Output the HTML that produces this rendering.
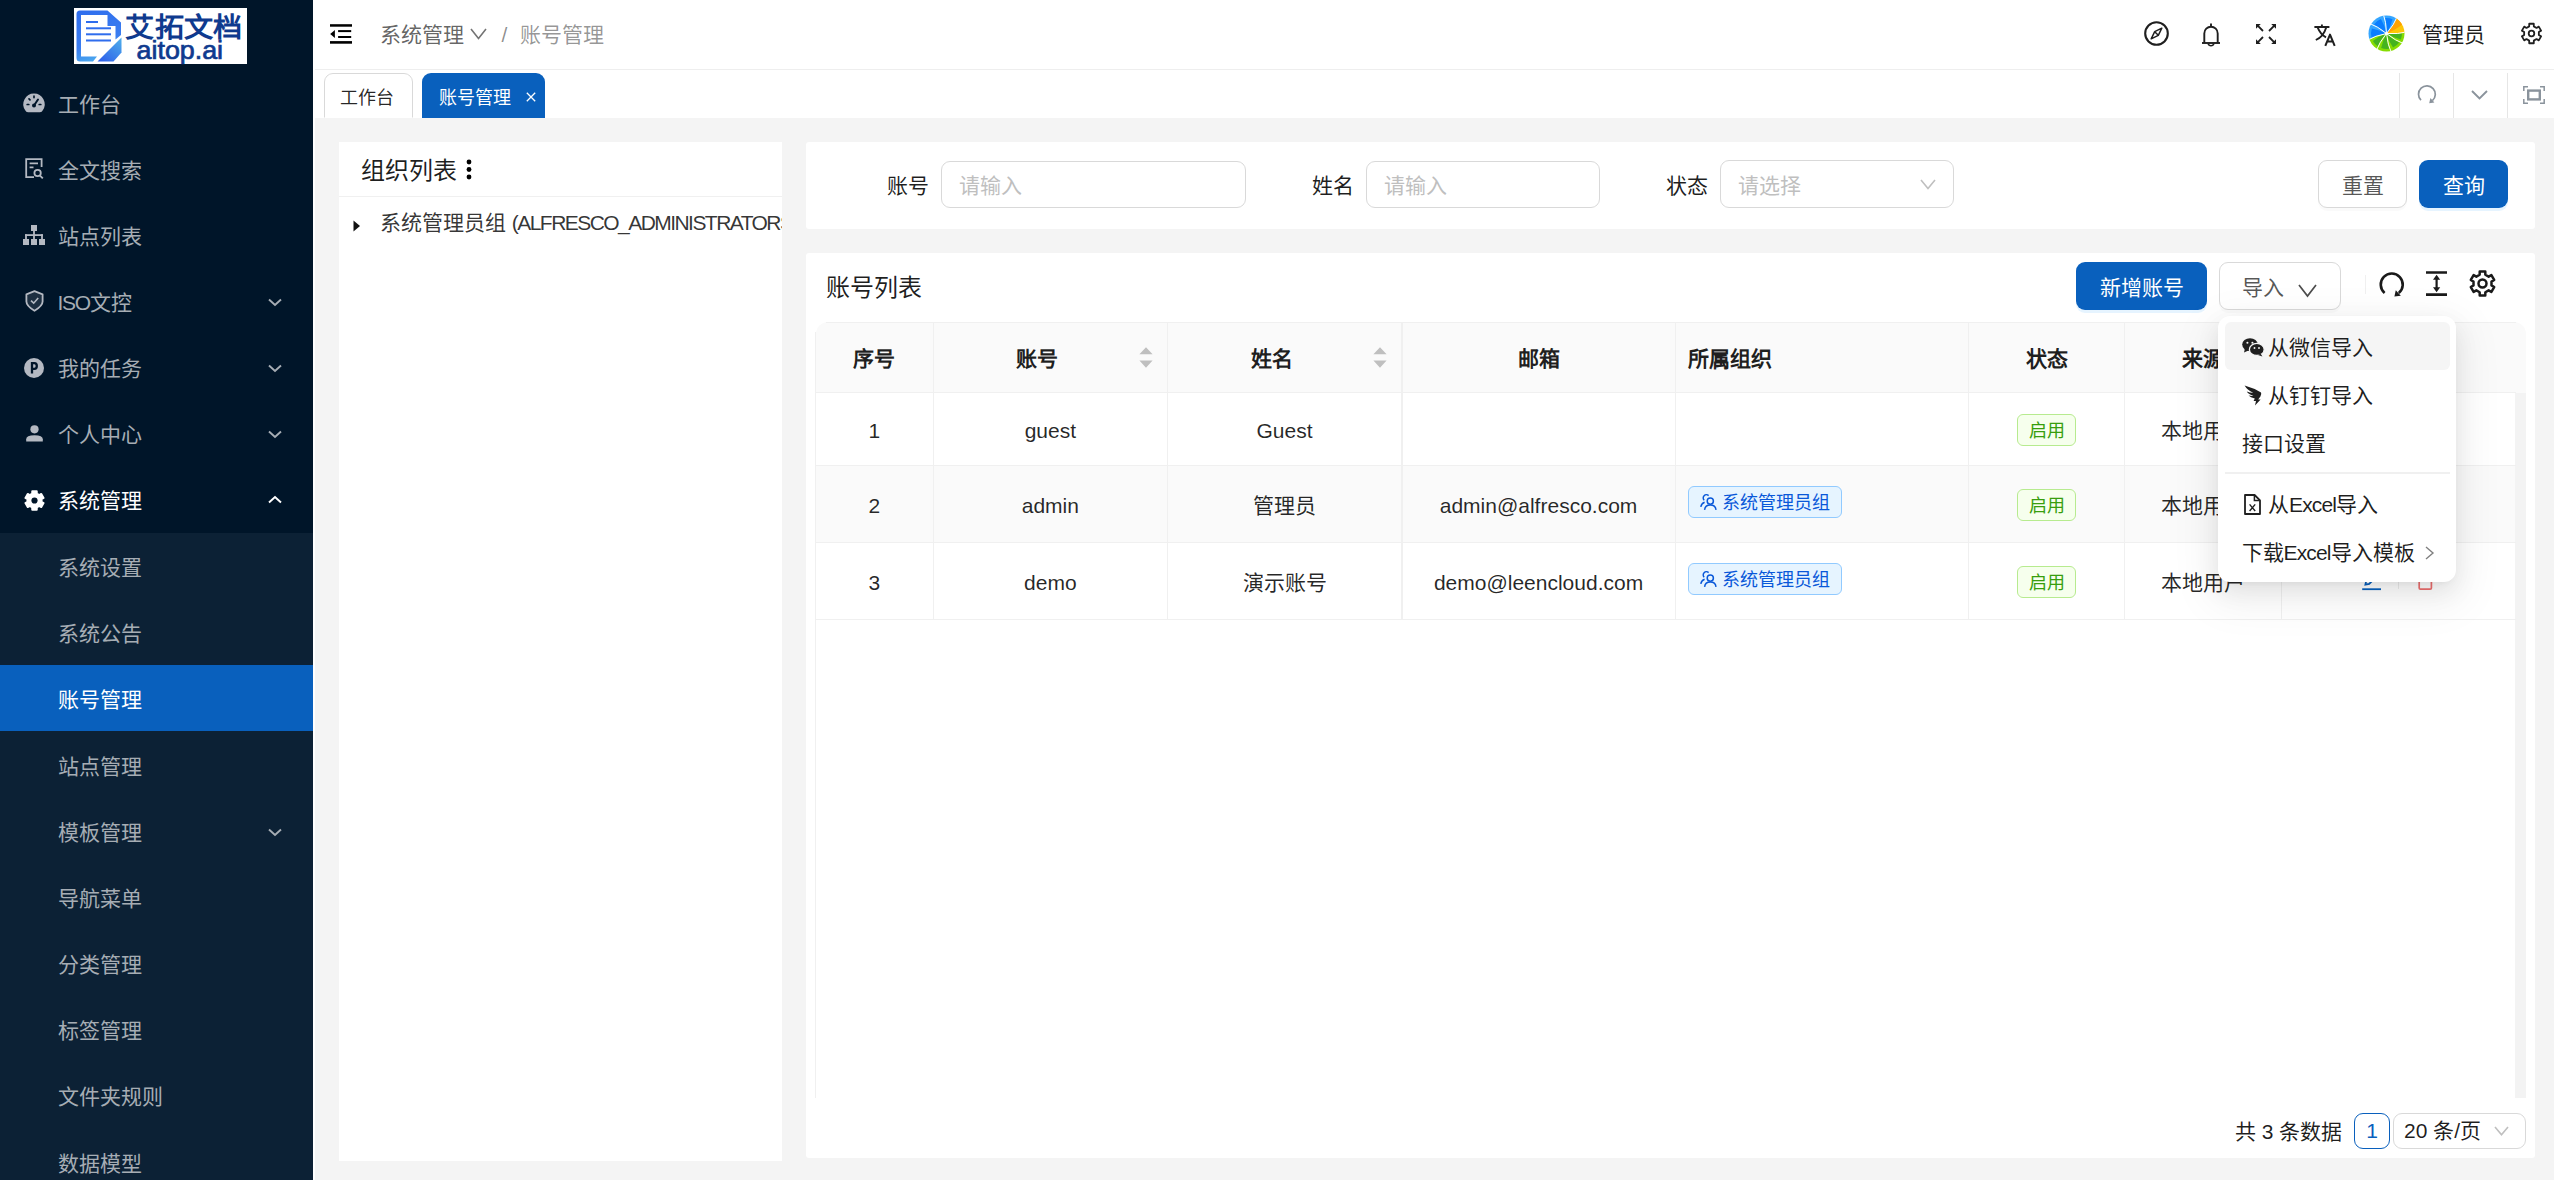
<!DOCTYPE html><html lang="zh-CN"><head><meta charset="utf-8"><title>账号管理</title><style>
*{box-sizing:border-box;margin:0;padding:0}
html,body{width:2554px;height:1180px;overflow:hidden}
body{position:relative;background:#f4f4f4;font-family:"Liberation Sans",sans-serif;font-size:21px;color:rgba(0,0,0,.88);-webkit-font-smoothing:antialiased}
.abs{position:absolute}
i{display:inline-block;width:1em;text-align:center;font-style:normal}
.t{position:absolute;white-space:nowrap;line-height:30px;height:30px}
svg{position:absolute;overflow:visible}
#side{position:absolute;left:0;top:0;width:313px;height:1180px;background:#001529}
#sub{position:absolute;left:0;top:533px;width:313px;height:647px;background:#0c2135}
.mi{position:absolute;left:57.5px;color:#a6adb4;font-size:21px;line-height:30px;height:30px;white-space:nowrap}
.mi.w{color:#fff}
#hdr{position:absolute;left:315px;top:0;width:2239px;height:70px;background:#fff;border-bottom:1px solid #eee}
#tabs{position:absolute;left:315px;top:70px;width:2239px;height:47.5px;background:#fff}
.card{position:absolute;background:#fff}
.inp{position:absolute;border:1.5px solid #d9d9d9;border-radius:9px;background:#fff}
.ph{color:#bfbfbf}
.btn{position:absolute;border-radius:9px;text-align:center;font-size:21px;line-height:47px;height:47.5px;padding-top:2px}
.btn.p{background:#0960bd;color:#fff;box-shadow:0 3px 0 rgba(5,145,255,.1)}
.btn.d{background:#fff;color:rgba(0,0,0,.66);border:1.5px solid #d9d9d9;line-height:44px;padding-top:2.5px;box-shadow:0 3px 0 rgba(0,0,0,.02)}
.th{position:absolute;font-weight:bold;font-size:21px;line-height:30px;height:30px;text-align:center;white-space:nowrap;color:rgba(0,0,0,.88)}
.td{position:absolute;font-size:21px;line-height:30px;height:30px;text-align:center;white-space:nowrap;color:rgba(0,0,0,.85)}
.vl{position:absolute;width:1.5px;background:#f0f0f0}
.hl{position:absolute;height:1.5px;background:#f0f0f0}
.gtag{position:absolute;width:59px;height:32px;border:1.5px solid #b7eb8f;background:#f6ffed;border-radius:6px;color:#389e0d;font-size:18px;line-height:29px;padding-top:2.2px;text-align:center}
.btag{position:absolute;width:154px;height:32px;border:1.5px solid #91caff;background:#e6f4ff;border-radius:6px;color:#0958d9;font-size:18px;line-height:29px;white-space:nowrap}
.dd{position:absolute;left:2218px;top:316px;width:238px;height:266px;background:#fff;border-radius:12px;box-shadow:0 9px 24px 0 rgba(0,0,0,.08),0 4px 9px -6px rgba(0,0,0,.12),0 13px 42px 12px rgba(0,0,0,.05)}
.di{position:absolute;font-size:21px;line-height:30px;height:30px;white-space:nowrap;color:rgba(0,0,0,.88)}
</style></head><body>
<div id="side">
<div id="sub"></div>
<div class="abs" style="left:74px;top:8px;width:173px;height:56px;background:#fff"></div>
<svg style="left:74px;top:8px" width="173" height="56" viewBox="0 0 173 56">
<defs><linearGradient id="lg1" x1="0" y1="0" x2="0.3" y2="1"><stop offset="0" stop-color="#2f6ded"/><stop offset="0.7" stop-color="#3a7df0"/><stop offset="1" stop-color="#4aa6ee"/></linearGradient>
<linearGradient id="lg2" x1="1" y1="0" x2="0.2" y2="1"><stop offset="0" stop-color="#4fb0ea"/><stop offset="1" stop-color="#2f62ea"/></linearGradient></defs>
<path d="M6 2.5 H33.5 L47 14.5 V27 L41.5 31.5 V18 H33.5 V7 H7 V48.5 H23 L19 53.5 H6 Q2.5 53.5 2.5 50 V6 Q2.5 2.5 6 2.5Z" fill="url(#lg1)"/>
<path d="M47.5 29.5 V44.5 L39.5 53.5 H23.5 Z" fill="url(#lg2)"/>
<rect x="12" y="13" width="12" height="2" fill="#2f6ded"/><rect x="12" y="19.3" width="25" height="2" fill="#2f6ded"/><rect x="12" y="25.3" width="25" height="2" fill="#2f6ded"/><rect x="12" y="31.5" width="25" height="2" fill="#2f6ded"/>
<text x="109.7" y="28.6" text-anchor="middle" font-family="Liberation Sans, sans-serif" font-weight="bold" font-size="27" fill="#0f3a8e" textLength="116.5" lengthAdjust="spacingAndGlyphs">艾拓文档</text>
<text x="105.8" y="50.7" text-anchor="middle" font-family="Liberation Sans, sans-serif" font-size="25.5" fill="#0f3a8e" stroke="#0f3a8e" stroke-width="0.7" textLength="86.5" lengthAdjust="spacingAndGlyphs">aitop.ai</text>
</svg>
<div class="mi" style="top:90.0px"><i>工</i><i>作</i><i>台</i></div>
<div class="mi" style="top:156.0px"><i>全</i><i>文</i><i>搜</i><i>索</i></div>
<div class="mi" style="top:222.0px"><i>站</i><i>点</i><i>列</i><i>表</i></div>
<div class="mi" style="top:288.0px"><span style="letter-spacing:-1.3px">ISO</span><i>文</i><i>控</i></div>
<svg style="left:268px;top:298.0px" width="14" height="9" viewBox="0 0 14 9"><path d="M1 1.5 L7 7 L13 1.5" fill="none" stroke="#a6adb4" stroke-width="1.9"/></svg>
<div class="mi" style="top:354.0px"><i>我</i><i>的</i><i>任</i><i>务</i></div>
<svg style="left:268px;top:364.0px" width="14" height="9" viewBox="0 0 14 9"><path d="M1 1.5 L7 7 L13 1.5" fill="none" stroke="#a6adb4" stroke-width="1.9"/></svg>
<div class="mi" style="top:420.0px"><i>个</i><i>人</i><i>中</i><i>心</i></div>
<svg style="left:268px;top:430.0px" width="14" height="9" viewBox="0 0 14 9"><path d="M1 1.5 L7 7 L13 1.5" fill="none" stroke="#a6adb4" stroke-width="1.9"/></svg>
<div class="mi w" style="top:486.0px"><i>系</i><i>统</i><i>管</i><i>理</i></div>
<svg style="left:268px;top:495px" width="14" height="9" viewBox="0 0 14 9"><path d="M1 7.5 L7 2 L13 7.5" fill="none" stroke="#fff" stroke-width="1.9"/></svg>
<div class="mi" style="top:553.0px"><i>系</i><i>统</i><i>设</i><i>置</i></div>
<div class="mi" style="top:619.2px"><i>系</i><i>统</i><i>公</i><i>告</i></div>
<div class="abs" style="left:0;top:665.3px;width:313px;height:66px;background:#0960bd"></div>
<div class="mi w" style="top:685.3px"><i>账</i><i>号</i><i>管</i><i>理</i></div>
<div class="mi" style="top:751.5px"><i>站</i><i>点</i><i>管</i><i>理</i></div>
<div class="mi" style="top:817.7px"><i>模</i><i>板</i><i>管</i><i>理</i></div>
<svg style="left:268px;top:827.7px" width="14" height="9" viewBox="0 0 14 9"><path d="M1 1.5 L7 7 L13 1.5" fill="none" stroke="#a6adb4" stroke-width="1.9"/></svg>
<div class="mi" style="top:883.9px"><i>导</i><i>航</i><i>菜</i><i>单</i></div>
<div class="mi" style="top:950.0px"><i>分</i><i>类</i><i>管</i><i>理</i></div>
<div class="mi" style="top:1016.2px"><i>标</i><i>签</i><i>管</i><i>理</i></div>
<div class="mi" style="top:1082.4px"><i>文</i><i>件</i><i>夹</i><i>规</i><i>则</i></div>
<div class="mi" style="top:1148.5px"><i>数</i><i>据</i><i>模</i><i>型</i></div>
<svg style="left:23px;top:93px" width="22" height="20" viewBox="0 0 22 20"><path d="M11 0.6 A10.6 10.6 0 0 0 2.2 17.2 Q3 19.3 5 19.3 H17 Q19 19.3 19.8 17.2 A10.6 10.6 0 0 0 11 0.6Z" fill="#b4b9c2"/><g stroke="#001529" stroke-width="1.7" stroke-linecap="round"><path d="M11 12.5 L15 6.5" stroke-width="2"/><path d="M4.2 11.5 h1.6 M16.2 11.5 h1.6 M11 3.2 v1.4 M6 5.8 l1 1"/></g><circle cx="11" cy="12.5" r="2" fill="#001529"/></svg>
<svg style="left:24.5px;top:158px" width="19" height="22" viewBox="0 0 19 22"><g fill="none" stroke="#b4b9c2" stroke-width="1.8"><path d="M9 19.2 H1.2 V1.2 H16.6 V9"/><path d="M4.6 5.4 H13 M4.6 9.3 H8.5"/><circle cx="12.6" cy="15" r="3.2"/><path d="M15 17.6 L17.8 20.4"/></g></svg>
<svg style="left:23px;top:225px" width="22" height="20" viewBox="0 0 22 20"><g fill="#b4b9c2"><rect x="8" y="0" width="6" height="6"/><rect x="0" y="14" width="6" height="6"/><rect x="8" y="14" width="6" height="6"/><rect x="16" y="14" width="6" height="6"/><rect x="10.1" y="6" width="1.8" height="8"/><rect x="2.1" y="9.2" width="17.8" height="1.8"/><rect x="2.1" y="9.2" width="1.8" height="5"/><rect x="18.1" y="9.2" width="1.8" height="5"/></g></svg>
<svg style="left:24.5px;top:290px" width="19" height="22" viewBox="0 0 19 22"><path d="M9.5 1.2 L17.6 4.4 V11.6 Q17.6 16 9.5 20.8 Q1.4 16 1.4 11.6 V4.4Z" fill="rgba(180,185,194,.16)" stroke="#b4b9c2" stroke-width="1.8" stroke-linejoin="round"/><path d="M6 10.6 L8.7 13.2 L13.2 8" fill="none" stroke="#b4b9c2" stroke-width="1.6"/></svg>
<svg style="left:24px;top:358px" width="20" height="20" viewBox="0 0 20 20"><circle cx="10" cy="10" r="10" fill="#b4b9c2"/><path d="M8 15.4 V5.2 H10.4 Q12.8 5.2 12.8 8 Q12.8 10.8 10.4 10.8 H8" fill="none" stroke="#001529" stroke-width="2.3"/></svg>
<svg style="left:25.5px;top:425px" width="17" height="17" viewBox="0 0 17 17"><circle cx="8.5" cy="4.3" r="4.1" fill="#b4b9c2"/><path d="M0.2 16.6 V14.2 Q0.2 10.2 8.5 10.2 Q16.8 10.2 16.8 14.2 V16.6Z" fill="#b4b9c2"/></svg>
<svg style="left:23.5px;top:489.5px" width="21" height="21" viewBox="0 0 21 21"><path d="M12.74 19.63 L8.26 19.63 L8.20 17.32 L5.74 15.90 L3.72 17.01 L1.47 13.12 L3.44 11.92 L3.44 9.08 L1.47 7.88 L3.72 3.99 L5.74 5.10 L8.20 3.68 L8.26 1.37 L12.74 1.37 L12.80 3.68 L15.26 5.10 L17.28 3.99 L19.53 7.88 L17.56 9.08 L17.56 11.92 L19.53 13.12 L17.28 17.01 L15.26 15.90 L12.80 17.32Z" fill="#fff" stroke="#fff" stroke-width="2" stroke-linejoin="round"/><circle cx="10.5" cy="10.5" r="3.1" fill="#001529"/></svg>
</div>
<div class="abs" style="left:313px;top:0;width:1.5px;height:1180px;background:#fff"></div>
<div id="hdr"></div>
<svg style="left:330px;top:24px" width="22" height="20" viewBox="0 0 22 20"><rect x="0" y="0.2" width="22" height="2.5"/><rect x="8.1" y="6.1" width="13.1" height="2"/><rect x="8.1" y="12" width="13.1" height="2"/><rect x="0" y="17.1" width="22" height="2.6"/><path d="M0.2 10 L4.9 5.9 V14.1Z"/></svg>
<div class="t" style="left:380px;top:19.5px;color:rgba(0,0,0,.62)"><i>系</i><i>统</i><i>管</i><i>理</i></div>
<svg style="left:470px;top:28px" width="17" height="12" viewBox="0 0 17 12"><path d="M1 1 L8.5 10.5 L16 1" fill="none" stroke="rgba(0,0,0,.55)" stroke-width="1.6"/></svg>
<div class="t" style="left:501.5px;top:19.5px;color:rgba(0,0,0,.45)">/</div>
<div class="t" style="left:520px;top:19.5px;color:rgba(0,0,0,.42)"><i>账</i><i>号</i><i>管</i><i>理</i></div>
<svg style="left:2144px;top:21px" width="25" height="25" viewBox="0 0 25 25"><circle cx="12.5" cy="12.5" r="11.3" fill="none" stroke="#1f1f1f" stroke-width="2.1"/><path d="M17.8 7.2 L14.3 14.3 L7.2 17.8 L10.7 10.7Z M10.7 10.7 L14.3 14.3" fill="none" stroke="#1f1f1f" stroke-width="1.5" stroke-linejoin="round"/></svg>
<svg style="left:2202.2px;top:22.6px" width="18" height="25" viewBox="0 0 18 25"><g fill="none" stroke="#1f1f1f" stroke-width="1.9"><path d="M0 20 H18"/><path d="M2.3 20 V10.4 A6.7 6.7 0 0 1 15.7 10.4 V20"/><path d="M9 3.6 V0.4"/><path d="M6.2 20.6 A2.9 2.9 0 0 0 11.8 20.6" stroke-width="1.7"/></g></svg>
<svg style="left:2255.5px;top:23.5px" width="20" height="20" viewBox="0 0 20 20"><g fill="none" stroke="#1f1f1f" stroke-width="1.8"><path d="M1.2 1.2 L7 7 M18.8 1.2 L13 7 M1.2 18.8 L7 13 M18.8 18.8 L13 13"/></g><g fill="#1f1f1f"><path d="M0 0 H4.8 L0 4.8Z M20 0 V4.8 L15.2 0Z M0 20 V15.2 L4.8 20Z M20 20 H15.2 L20 15.2Z"/></g></svg>
<svg style="left:2313.5px;top:24px" width="22" height="22" viewBox="0 0 22 22"><g fill="none" stroke="#1f1f1f" stroke-width="1.9"><path d="M0.4 3 H15.4 M7.9 0.4 V3"/><path d="M3.6 3.4 Q6.5 10.5 12 13.4"/><path d="M12.2 3.4 Q9.5 12.5 1.8 16"/><path d="M11.3 21.9 L16 10.6 L20.7 21.9 M13 17.6 H19" stroke-width="2" stroke-linejoin="round"/></g></svg>
<svg style="left:2368.2px;top:15.4px" width="37" height="37" viewBox="-18.5 -18.5 37 37"><defs><clipPath id="avc"><circle cx="0" cy="0" r="18"/></clipPath></defs><g clip-path="url(#avc)"><path d="M0 0 Q10.96 0.96 21.92 -1.92 A22.0 22.0 0 0 0 11.66 -18.66 Q7.36 -8.17 0 0Z" fill="#fdc707"/><path d="M0 0 Q10.23 -4.03 18.76 -11.49 A22.0 22.0 0 0 0 11.66 -18.66 Q7.36 -8.17 0 0Z" fill="#ffa200"/><path d="M0 0 Q7.36 -8.17 11.66 -18.66 A22.0 22.0 0 0 0 -3.82 -21.67 Q0.00 -11.00 0 0Z" fill="#35a6ff"/><path d="M0 0 Q4.19 -6.52 6.00 -14.29 A15.5 15.5 0 0 0 -1.34 -15.44 Q0.68 -7.72 0 0Z" fill="#0b7dff"/><path d="M0 0 Q0.00 -11.00 -3.82 -21.67 A22.0 22.0 0 0 0 -19.05 -11.00 Q-8.43 -7.07 0 0Z" fill="#35a6ff"/><path d="M0 0 Q-1.48 -7.61 -5.55 -14.47 A15.5 15.5 0 0 0 -12.54 -9.11 Q-5.38 -5.57 0 0Z" fill="#0b7dff"/><path d="M0 0 Q-8.43 -7.07 -19.05 -11.00 A22.0 22.0 0 0 0 -20.67 7.52 Q-10.83 1.91 0 0Z" fill="#35a6ff"/><path d="M0 0 Q-6.78 -3.76 -14.66 -5.05 A15.5 15.5 0 0 0 -15.04 3.75 Q-7.73 0.54 0 0Z" fill="#0b7dff"/><path d="M0 0 Q-10.83 1.91 -20.67 7.52 A22.0 22.0 0 0 0 -11.00 19.05 Q-7.07 8.43 0 0Z" fill="#86dc02"/><path d="M0 0 Q-7.34 2.50 -13.58 7.47 A15.5 15.5 0 0 0 -8.85 12.73 Q-5.46 5.50 0 0Z" fill="#45b320"/><path d="M0 0 Q-7.07 8.43 -11.00 19.05 A22.0 22.0 0 0 0 5.69 21.25 Q0.96 10.96 0 0Z" fill="#86dc02"/><path d="M0 0 Q-3.89 6.70 -5.33 14.56 A15.5 15.5 0 0 0 2.58 15.28 Q-0.05 7.75 0 0Z" fill="#45b320"/><path d="M0 0 Q0.96 10.96 5.69 21.25 A22.0 22.0 0 0 0 19.05 11.00 Q8.43 7.07 0 0Z" fill="#86dc02"/><path d="M0 0 Q1.99 7.49 6.53 14.06 A15.5 15.5 0 0 0 12.63 8.98 Q5.44 5.52 0 0Z" fill="#45b320"/><path d="M0 0 Q8.43 7.07 19.05 11.00 A22.0 22.0 0 0 0 21.92 -1.92 Q10.96 0.96 0 0Z" fill="#86dc02"/><path d="M0 0 Q6.55 4.14 14.34 5.88 A15.5 15.5 0 0 0 15.50 -0.22 Q7.65 1.24 0 0Z" fill="#45b320"/><g fill="none" stroke="#fff" stroke-width="0.95"><path d="M0 0 Q10.96 0.96 21.92 -1.92"/><path d="M0 0 Q7.36 -8.17 11.66 -18.66"/><path d="M0 0 Q0.00 -11.00 -3.82 -21.67"/><path d="M0 0 Q-8.43 -7.07 -19.05 -11.00"/><path d="M0 0 Q-10.83 1.91 -20.67 7.52"/><path d="M0 0 Q-7.07 8.43 -11.00 19.05"/><path d="M0 0 Q0.96 10.96 5.69 21.25"/><path d="M0 0 Q8.43 7.07 19.05 11.00"/></g><circle cx="0" cy="0" r="1.6" fill="#fff"/></g></svg>
<div class="t" style="left:2422px;top:19.5px;color:rgba(0,0,0,.88)"><i>管</i><i>理</i><i>员</i></div>
<svg style="left:2519.6px;top:22.4px" width="23" height="23" viewBox="0 0 23 23"><path d="M13.78 21.24 L9.22 21.24 L9.18 18.63 L6.48 17.07 L4.21 18.35 L1.93 14.39 L4.16 13.06 L4.16 9.94 L1.93 8.61 L4.21 4.65 L6.48 5.93 L9.18 4.37 L9.22 1.76 L13.78 1.76 L13.82 4.37 L16.52 5.93 L18.79 4.65 L21.07 8.61 L18.84 9.94 L18.84 13.06 L21.07 14.39 L18.79 18.35 L16.52 17.07 L13.82 18.63Z" fill="none" stroke="#1f1f1f" stroke-width="1.8" stroke-linejoin="round"/><circle cx="11.5" cy="11.5" r="2.8" fill="none" stroke="#1f1f1f" stroke-width="1.8"/></svg>
<div id="tabs"></div>
<div class="abs" style="left:324px;top:73px;width:89px;height:50px;border:1.5px solid #d9d9d9;border-radius:9px 9px 0 0;background:#fff;clip-path:inset(0 0 5.5px 0)"></div>
<div class="t" style="left:340px;top:82.5px;font-size:18px;color:rgba(0,0,0,.85)"><i>工</i><i>作</i><i>台</i></div>
<div class="abs" style="left:422px;top:73px;width:123px;height:44.5px;border-radius:9px 9px 0 0;background:#0960bd"></div>
<div class="t" style="left:439px;top:82.5px;font-size:18px;color:#fff"><i>账</i><i>号</i><i>管</i><i>理</i></div>
<svg style="left:525.5px;top:92px" width="10" height="10" viewBox="0 0 10 10"><path d="M0.8 0.8 L9.2 9.2 M9.2 0.8 L0.8 9.2" stroke="#fff" stroke-width="1.3" fill="none"/></svg>
<div class="abs" style="left:2399.0px;top:73px;width:1px;height:44.5px;background:#e6e6e6"></div>
<div class="abs" style="left:2453.0px;top:73px;width:1px;height:44.5px;background:#e6e6e6"></div>
<div class="abs" style="left:2507.0px;top:73px;width:1px;height:44.5px;background:#e6e6e6"></div>
<svg style="left:2417px;top:84px" width="20" height="20" viewBox="0 0 20 20"><path d="M4 16.2 A8.4 8.4 0 1 1 15.4 16.6" fill="none" stroke="#8a939c" stroke-width="1.7"/><path d="M13.4 14 L12.2 19.2 L17.4 18.4Z" fill="#8a939c"/></svg>
<svg style="left:2471px;top:90px" width="17" height="11" viewBox="0 0 17 11"><path d="M1 1 L8.5 8.4 L16 1" fill="none" stroke="#8a939c" stroke-width="1.9"/></svg>
<svg style="left:2523px;top:85.5px" width="22" height="18" viewBox="0 0 22 18"><g fill="none" stroke="#8a939c"><rect x="5.2" y="4.6" width="11.6" height="8.8" stroke-width="2.4"/><path d="M0.8 5 V0.8 H5 M17 0.8 H21.2 V5 M21.2 13 V17.2 H17 M5 17.2 H0.8 V13" stroke-width="1.5"/></g></svg>
<div class="card" style="left:339px;top:142px;width:443px;height:1019px;overflow:hidden">
<div class="t" style="left:22px;top:14px;font-size:24px;color:rgba(0,0,0,.88)"><i>组</i><i>织</i><i>列</i><i>表</i></div>
<svg style="left:126px;top:17px" width="8" height="22" viewBox="0 0 8 22"><circle cx="4" cy="3" r="2.4"/><circle cx="4" cy="10.5" r="2.4"/><circle cx="4" cy="18" r="2.4"/></svg>
<div class="hl" style="left:0;top:53.5px;width:443px"></div>
<svg style="left:14px;top:78px" width="8" height="12" viewBox="0 0 8 12"><path d="M0.5 0.5 L7 6 L0.5 11.5Z" fill="#111"/></svg>
<div class="t" style="left:41px;top:66px;color:rgba(0,0,0,.8)"><i>系</i><i>统</i><i>管</i><i>理</i><i>员</i><i>组</i> <span style="letter-spacing:-1.55px">(ALFRESCO_ADMINISTRATORS)</span></div>
</div>
<div class="card" style="left:806px;top:142px;width:1729px;height:87px;border-radius:3px"></div>
<div class="t" style="left:887px;top:171px"><i>账</i><i>号</i></div>
<div class="inp" style="left:941px;top:160.5px;width:305px;height:47.5px"></div>
<div class="t ph" style="left:959px;top:171px"><i>请</i><i>输</i><i>入</i></div>
<div class="t" style="left:1311.5px;top:171px"><i>姓</i><i>名</i></div>
<div class="inp" style="left:1366px;top:160.5px;width:234px;height:47.5px"></div>
<div class="t ph" style="left:1384px;top:171px"><i>请</i><i>输</i><i>入</i></div>
<div class="t" style="left:1666px;top:171px"><i>状</i><i>态</i></div>
<div class="inp" style="left:1720px;top:160px;width:234px;height:48px"></div>
<div class="t ph" style="left:1738px;top:170.5px"><i>请</i><i>选</i><i>择</i></div>
<svg style="left:1920px;top:178.5px" width="16" height="11" viewBox="0 0 16 11"><path d="M1 1 L8 9.6 L15 1" fill="none" stroke="#bfbfbf" stroke-width="1.6"/></svg>
<div class="btn d" style="left:2318px;top:160px;width:89px"><i>重</i><i>置</i></div>
<div class="btn p" style="left:2419px;top:160px;width:89px"><i>查</i><i>询</i></div>
<div class="card" style="left:806px;top:253px;width:1729px;height:905px;border-radius:3px"></div>
<div class="t" style="left:826px;top:272.5px;font-size:24px"><i>账</i><i>号</i><i>列</i><i>表</i></div>
<div class="btn p" style="left:2076px;top:262px;width:131px"><i>新</i><i>增</i><i>账</i><i>号</i></div>
<div class="btn d" style="left:2219px;top:262px;width:122px;text-align:left;padding-left:22px"><i>导</i><i>入</i></div>
<svg style="left:2297.5px;top:284px" width="19" height="14" viewBox="0 0 19 14"><path d="M1 1 L9.5 12 L18 1" fill="none" stroke="rgba(0,0,0,.7)" stroke-width="1.7"/></svg>
<div class="abs" style="left:2365px;top:275px;width:1px;height:19px;background:#f0f0f0"></div>
<svg style="left:2379px;top:271.5px" width="25" height="25" viewBox="0 0 25 25"><path d="M5.6 20.9 A11 11 0 1 1 19.8 21" fill="none" stroke="#1a1a1a" stroke-width="2.6"/><path d="M16.8 18.2 L15.4 24.4 L21.8 23.7Z" fill="#1a1a1a"/></svg>
<svg style="left:2426px;top:271px" width="21" height="25" viewBox="0 0 21 25"><g fill="none" stroke="#1a1a1a"><path d="M0 1.5 H21 M0 23.6 H21" stroke-width="2.6"/><path d="M10.6 7.5 V17.5" stroke-width="2.2"/></g><path d="M10.6 3.8 L14.2 8.8 H7Z M10.6 21.2 L14.2 16.2 H7Z" fill="#1a1a1a"/></svg>
<svg style="left:2469.1px;top:270px" width="27" height="27" viewBox="0 0 27 27"><path d="M16.29 25.38 L10.71 25.38 L10.66 22.25 L7.34 20.34 L4.61 21.85 L1.82 17.03 L4.50 15.41 L4.50 11.59 L1.82 9.97 L4.61 5.15 L7.34 6.66 L10.66 4.75 L10.71 1.62 L16.29 1.62 L16.34 4.75 L19.66 6.66 L22.39 5.15 L25.18 9.97 L22.50 11.59 L22.50 15.41 L25.18 17.03 L22.39 21.85 L19.66 20.34 L16.34 22.25Z" fill="none" stroke="#1a1a1a" stroke-width="2.5" stroke-linejoin="round"/><circle cx="13.5" cy="13.5" r="4" fill="none" stroke="#1a1a1a" stroke-width="2.5"/></svg>
<div class="abs" style="left:815.5px;top:322.0px;width:1710.0px;height:70.5px;background:#fafafa;border-radius:12px 12px 0 0"></div>
<div class="abs" style="left:815.5px;top:465.2px;width:1700.0px;height:77.2px;background:#fafafa"></div>
<div class="abs" style="left:2515px;top:392.5px;width:11px;height:705px;background:#f3f3f3"></div>
<div class="vl" style="left:815.0px;top:332px;height:765.5px;width:1px"></div>
<div class="hl" style="left:825.5px;top:321.5px;width:1690.0px"></div>
<div class="hl" style="left:815.5px;top:391.8px;width:1700.0px"></div>
<div class="hl" style="left:815.5px;top:464.5px;width:1700.0px"></div>
<div class="hl" style="left:815.5px;top:541.7px;width:1700.0px"></div>
<div class="hl" style="left:815.5px;top:618.7px;width:1700.0px"></div>
<div class="vl" style="left:932.7px;top:322.0px;height:297.4px"></div>
<div class="vl" style="left:1166.6px;top:322.0px;height:297.4px"></div>
<div class="vl" style="left:1401.1px;top:322.0px;height:297.4px"></div>
<div class="vl" style="left:1674.6px;top:322.0px;height:297.4px"></div>
<div class="vl" style="left:1967.8px;top:322.0px;height:297.4px"></div>
<div class="vl" style="left:2123.8px;top:322.0px;height:297.4px"></div>
<div class="vl" style="left:2280.7px;top:322.0px;height:297.4px"></div>
<div class="th" style="left:815.5px;top:344.0px;width:117.9px"><i>序</i><i>号</i></div>
<div class="th" style="left:920.4px;top:344.0px;width:233.9px"><i>账</i><i>号</i></div>
<div class="th" style="left:1154.8px;top:344.0px;width:234.5px"><i>姓</i><i>名</i></div>
<div class="th" style="left:1401.8px;top:344.0px;width:273.5px"><i>邮</i><i>箱</i></div>
<div class="th" style="left:1688px;top:344px;text-align:left"><i>所</i><i>属</i><i>组</i><i>织</i></div>
<div class="th" style="left:1968.5px;top:344.0px;width:156.0px"><i>状</i><i>态</i></div>
<div class="th" style="left:2124.5px;top:344.0px;width:156.9px"><i>来</i><i>源</i></div>
<div class="th" style="left:2281.4px;top:344.0px;width:234.1px"><i>操</i><i>作</i></div>
<svg style="left:1139px;top:347px" width="14" height="21" viewBox="0 0 14 21"><path d="M7 0.2 L13.6 7.2 H0.4Z M7 20.8 L13.6 13.6 H0.4Z" fill="#bfbfbf"/></svg>
<svg style="left:1373px;top:347px" width="14" height="21" viewBox="0 0 14 21"><path d="M7 0.2 L13.6 7.2 H0.4Z M7 20.8 L13.6 13.6 H0.4Z" fill="#bfbfbf"/></svg>
<div class="td" style="left:815.5px;top:416.0px;width:117.9px">1</div>
<div class="td" style="left:933.4px;top:416.0px;width:233.9px">guest</div>
<div class="td" style="left:1167.3px;top:416.0px;width:234.5px">Guest</div>
<div class="td" style="left:1401.8px;top:416.0px;width:273.5px"></div>
<div class="gtag" style="left:2017px;top:413.7px"><i>启</i><i>用</i></div>
<div class="td" style="left:2124.5px;top:416.0px;width:156.9px"><i>本</i><i>地</i><i>用</i><i>户</i></div>
<svg style="left:2360.5px;top:418.0px" width="21" height="21" viewBox="0 0 21 21"><g fill="none" stroke="#0960bd" stroke-width="1.8"><path d="M1.2 19.2 H20"/><path d="M4.4 14.6 L5.2 10.8 L14.2 1.8 L17.2 4.8 L8.2 13.8Z"/></g></svg>
<div class="abs" style="left:2398px;top:419.5px;width:1px;height:17px;background:#ececec"></div>
<svg style="left:2414.5px;top:418.2px" width="21" height="21" viewBox="0 0 21 21"><g fill="none" stroke="#ed6f6f" stroke-width="1.7"><path d="M1.5 5 H19.5 M7 4.6 V1.6 H14 V4.6"/><path d="M4.2 5.4 V18 Q4.2 19.2 5.4 19.2 H15.2 Q16.4 19.2 16.4 18 V5.4"/></g></svg>
<div class="td" style="left:815.5px;top:491.0px;width:117.9px">2</div>
<div class="td" style="left:933.4px;top:491.0px;width:233.9px">admin</div>
<div class="td" style="left:1167.3px;top:491.0px;width:234.5px"><i>管</i><i>理</i><i>员</i></div>
<div class="td" style="left:1401.8px;top:491.0px;width:273.5px">admin@alfresco.com</div>
<div class="btag" style="left:1688px;top:485.5px"><svg style="left:10.5px;top:7px" width="17" height="16" viewBox="0 0 17 16"><g fill="none" stroke="#0958d9" stroke-width="1.5"><circle cx="10.3" cy="7.1" r="3.1"/><path d="M4.6 15.8 Q5.2 11.1 10.3 11.1 Q15.4 11.1 16 15.8"/><path d="M8.6 1.6 A3.1 3.1 0 0 0 4.2 6.2 M0.8 12.8 Q1.4 9.4 4.6 8.2"/></g></svg><span style="position:absolute;left:33px;top:2.5px"><i>系</i><i>统</i><i>管</i><i>理</i><i>员</i><i>组</i></span></div>
<div class="gtag" style="left:2017px;top:488.7px"><i>启</i><i>用</i></div>
<div class="td" style="left:2124.5px;top:491.0px;width:156.9px"><i>本</i><i>地</i><i>用</i><i>户</i></div>
<svg style="left:2360.5px;top:493.0px" width="21" height="21" viewBox="0 0 21 21"><g fill="none" stroke="#0960bd" stroke-width="1.8"><path d="M1.2 19.2 H20"/><path d="M4.4 14.6 L5.2 10.8 L14.2 1.8 L17.2 4.8 L8.2 13.8Z"/></g></svg>
<div class="abs" style="left:2398px;top:494.5px;width:1px;height:17px;background:#ececec"></div>
<svg style="left:2414.5px;top:493.2px" width="21" height="21" viewBox="0 0 21 21"><g fill="none" stroke="#ed6f6f" stroke-width="1.7"><path d="M1.5 5 H19.5 M7 4.6 V1.6 H14 V4.6"/><path d="M4.2 5.4 V18 Q4.2 19.2 5.4 19.2 H15.2 Q16.4 19.2 16.4 18 V5.4"/></g></svg>
<div class="td" style="left:815.5px;top:568.0px;width:117.9px">3</div>
<div class="td" style="left:933.4px;top:568.0px;width:233.9px">demo</div>
<div class="td" style="left:1167.3px;top:568.0px;width:234.5px"><i>演</i><i>示</i><i>账</i><i>号</i></div>
<div class="td" style="left:1401.8px;top:568.0px;width:273.5px">demo@leencloud.com</div>
<div class="btag" style="left:1688px;top:562.5px"><svg style="left:10.5px;top:7px" width="17" height="16" viewBox="0 0 17 16"><g fill="none" stroke="#0958d9" stroke-width="1.5"><circle cx="10.3" cy="7.1" r="3.1"/><path d="M4.6 15.8 Q5.2 11.1 10.3 11.1 Q15.4 11.1 16 15.8"/><path d="M8.6 1.6 A3.1 3.1 0 0 0 4.2 6.2 M0.8 12.8 Q1.4 9.4 4.6 8.2"/></g></svg><span style="position:absolute;left:33px;top:2.5px"><i>系</i><i>统</i><i>管</i><i>理</i><i>员</i><i>组</i></span></div>
<div class="gtag" style="left:2017px;top:565.7px"><i>启</i><i>用</i></div>
<div class="td" style="left:2124.5px;top:568.0px;width:156.9px"><i>本</i><i>地</i><i>用</i><i>户</i></div>
<svg style="left:2360.5px;top:570.0px" width="21" height="21" viewBox="0 0 21 21"><g fill="none" stroke="#0960bd" stroke-width="1.8"><path d="M1.2 19.2 H20"/><path d="M4.4 14.6 L5.2 10.8 L14.2 1.8 L17.2 4.8 L8.2 13.8Z"/></g></svg>
<div class="abs" style="left:2398px;top:571.5px;width:1px;height:17px;background:#ececec"></div>
<svg style="left:2414.5px;top:570.2px" width="21" height="21" viewBox="0 0 21 21"><g fill="none" stroke="#ed6f6f" stroke-width="1.7"><path d="M1.5 5 H19.5 M7 4.6 V1.6 H14 V4.6"/><path d="M4.2 5.4 V18 Q4.2 19.2 5.4 19.2 H15.2 Q16.4 19.2 16.4 18 V5.4"/></g></svg>
<div class="t" style="left:2235px;top:1117px"><i>共</i> 3 <i>条</i><i>数</i><i>据</i></div>
<div class="abs" style="left:2354px;top:1113px;width:36px;height:36px;border:1.5px solid #0960bd;border-radius:9px;color:#0960bd;text-align:center;line-height:33px;font-size:21px">1</div>
<div class="inp" style="left:2393px;top:1113px;width:133px;height:36px;border-radius:9px"></div>
<div class="t" style="left:2404px;top:1116px">20 <i>条</i>/<i>页</i></div>
<svg style="left:2494px;top:1126px" width="15" height="10" viewBox="0 0 15 10"><path d="M1 1 L7.5 8.8 L14 1" fill="none" stroke="#bfbfbf" stroke-width="1.6"/></svg>
<div class="dd">
<div class="abs" style="left:6.5px;top:6.2px;width:225.5px;height:47.5px;background:#f5f5f5;border-radius:6px"></div>
<svg style="left:24.0px;top:22.0px" width="22" height="18" viewBox="0 0 22 18"><ellipse cx="8" cy="6.6" rx="7.8" ry="6.4" fill="#1f1f1f"/><path d="M3 10.5 L2 14.6 L6.4 12.4Z" fill="#1f1f1f"/><ellipse cx="14.8" cy="11.4" rx="7.4" ry="6" fill="#1f1f1f" stroke="#f5f5f5" stroke-width="1.3"/><path d="M18.6 15.8 L20.4 18.4 L16 17Z" fill="#1f1f1f"/><g fill="#f5f5f5"><circle cx="5.4" cy="4.8" r="1.05"/><circle cx="10.4" cy="4.8" r="1.05"/><circle cx="12.5" cy="10" r="0.95"/><circle cx="17" cy="10" r="0.95"/></g></svg>
<div class="di" style="left:50.0px;top:17.0px"><i>从</i><i>微</i><i>信</i><i>导</i><i>入</i></div>
<svg style="left:25.5px;top:69.0px" width="18" height="21" viewBox="0 0 18 21"><path d="M0.6 0.6 Q10 3.2 17 7.6 Q17.8 8.6 16.4 11.4 L14.2 14.4 H16.6 L11 20.6 L12 16 H9.6 L10.8 13.6 Q6.4 12.8 4.6 10.6 Q7.8 11.2 9.4 10.8 Q4.6 9.6 2.8 6.6 Q6.4 8 9.2 7.8 Q3 5 0.6 0.6Z" fill="#1f1f1f"/></svg>
<div class="di" style="left:50.0px;top:65.0px"><i>从</i><i>钉</i><i>钉</i><i>导</i><i>入</i></div>
<div class="di" style="left:23.5px;top:113.0px"><i>接</i><i>口</i><i>设</i><i>置</i></div>
<div class="abs" style="left:6.5px;top:156.0px;width:225.5px;height:1.5px;background:#f0f0f0"></div>
<svg style="left:26.0px;top:178.0px" width="17" height="21" viewBox="0 0 17 21"><g fill="none" stroke="#1f1f1f"><path d="M1 1 H10.6 L16 6.4 V20 H1Z" stroke-width="1.8" stroke-linejoin="round"/><path d="M10.4 1.4 V6.6 H15.6" stroke-width="1.5"/><path d="M5.6 10.4 L11.2 17 M11.2 10.4 L5.6 17" stroke-width="1.4"/></g></svg>
<div class="di" style="left:50.0px;top:174.0px"><i>从</i><span style="letter-spacing:-0.85px">Excel</span><i>导</i><i>入</i></div>
<div class="di" style="left:23.5px;top:222.0px"><i>下</i><i>载</i><span style="letter-spacing:-0.85px">Excel</span><i>导</i><i>入</i><i>模</i><i>板</i></div>
<svg style="left:207.0px;top:230.0px" width="9" height="14" viewBox="0 0 9 14"><path d="M1 1 L8 7 L1 13" fill="none" stroke="rgba(0,0,0,.5)" stroke-width="1.4"/></svg>
</div>
</body></html>
